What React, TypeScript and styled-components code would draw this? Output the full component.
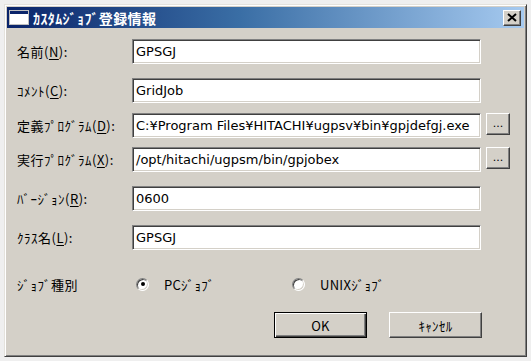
import React from "react";
import styled, { createGlobalStyle } from "styled-components";

const Global = createGlobalStyle`
  html, body { margin: 0; padding: 0; background: #efefef; }
  body { width: 531px; height: 361px; overflow: hidden; }
`;

const Window = styled.div`
  box-sizing: border-box;
  margin: 4px 0 0 4px;
  width: 523px;
  height: 353px;
  background: #d4d0c8;
  border: 1px solid;
  border-color: #e4e2dc #404040 #404040 #e4e2dc;
  box-shadow: inset 1px 1px #ffffff, inset -1px -1px #808080;
  padding: 2px;
  display: flex;
  flex-direction: column;
  font-family: "Noto Sans CJK JP", "DejaVu Sans", sans-serif;
  color: #000;
`;

const TitleBar = styled.div`
  height: 21px;
  display: flex;
  align-items: center;
  background: linear-gradient(to right, #0a246a 0%, #3a6ea5 45%, #a6caf0 100%);
  padding: 0 3px 0 2px;
`;

const TitleText = styled.div`
  color: #fff;
  font-weight: bold;
  font-size: 14px;
  letter-spacing: 0.4px;
  margin-left: 4px;
  flex: 1;
`;

const CloseButton = styled.div`
  box-sizing: border-box;
  width: 18px;
  height: 16px;
  background: #d4d0c8;
  border: 1px solid;
  border-color: #fff #404040 #404040 #fff;
  box-shadow: inset -1px -1px #808080;
  display: flex;
  align-items: center;
  justify-content: center;
`;

const Body = styled.div`
  flex: 1;
  padding: 11px 0 0 10px;
  display: flex;
  flex-direction: column;
`;

const Row = styled.div<{ $mt: number }>`
  display: flex;
  align-items: center;
  height: 25px;
  margin-top: ${(p) => p.$mt}px;
`;

const Label = styled.div`
  width: 115px;
  font-size: 13px;
  white-space: nowrap;
  letter-spacing: 0.5px;
`;

const U = styled.span`
  text-decoration: underline;
  text-underline-offset: 2px;
`;

const Field = styled.div`
  box-sizing: border-box;
  width: 349px;
  height: 25px;
  background: #fff;
  border: 1px solid;
  border-color: #808080 #ffffff #ffffff #808080;
  box-shadow: inset 1px 1px #404040, inset -1px -1px #d4d0c8;
  padding: 0 3px;
  display: flex;
  align-items: center;
  font-family: "DejaVu Sans", sans-serif;
  font-size: 13px;
  white-space: nowrap;
  overflow: hidden;
`;

const Browse = styled.div`
  box-sizing: border-box;
  align-self: flex-start;
  margin-left: 5px;
  width: 24px;
  height: 22px;
  background: #d4d0c8;
  border: 1px solid;
  border-color: #fff #404040 #404040 #fff;
  box-shadow: inset -1px -1px #808080;
  font-family: "DejaVu Sans", sans-serif;
  font-size: 11px;
  display: flex;
  align-items: flex-end;
  justify-content: center;
  padding-bottom: 4px;
`;

const RadioRow = styled.div`
  display: flex;
  align-items: center;
  height: 16px;
  margin-top: 26px;
`;

const RadioGroup = styled.div`
  display: flex;
  align-items: center;
`;

const RadioItem = styled.div<{ $w: number }>`
  display: flex;
  align-items: center;
  width: ${(p) => p.$w}px;
  font-size: 13px;
  letter-spacing: 0.3px;
`;

const RadioCircle = styled.div<{ $on: boolean }>`
  box-sizing: border-box;
  width: 13px;
  height: 13px;
  border-radius: 50%;
  background: #fff;
  border: 1px solid;
  border-color: #808080 #ffffff #ffffff #808080;
  box-shadow: inset 1px 1px #404040, inset -1px -1px #d4d0c8;
  margin: 0 15px 0 4px;
  display: flex;
  align-items: center;
  justify-content: center;
  &::after {
    content: "";
    width: 4px;
    height: 4px;
    border-radius: 50%;
    background: #000;
    display: ${(p) => (p.$on ? "block" : "none")};
  }
`;

const ButtonRow = styled.div`
  display: flex;
  margin-top: 20px;
  padding-left: 257px;
  gap: 22px;
`;

const Button = styled.div<{ $def?: boolean }>`
  box-sizing: border-box;
  width: 93px;
  height: 26px;
  background: #d4d0c8;
  border: 1px solid;
  border-color: ${(p) => (p.$def ? "#000" : "#fff #404040 #404040 #fff")};
  box-shadow: ${(p) =>
    p.$def
      ? "inset 1px 1px #fff, inset -1px -1px #404040, inset -2px -2px #808080"
      : "inset -1px -1px #808080"};
  display: flex;
  align-items: center;
  justify-content: center;
  font-size: 13px;
  letter-spacing: 0.3px;
`;

function TitleIcon() {
  return (
    <svg width="20" height="15" viewBox="0 0 20 15">
      <rect x="0.5" y="0.5" width="19" height="14" fill="#fff" stroke="#c0c0c0" />
      <rect x="1" y="1" width="18" height="3" fill="#0a246a" />
    </svg>
  );
}

function CloseIcon() {
  return (
    <svg width="10" height="9" viewBox="0 0 10 9">
      <path d="M1 1 L9 8 M9 1 L1 8" stroke="#000" strokeWidth="2" />
    </svg>
  );
}

type FieldRow = {
  label: React.ReactNode;
  value: string;
  mt: number;
  browse?: boolean;
};

const rows: FieldRow[] = [
  { label: <>名前(<U>N</U>):</>, value: "GPSGJ", mt: 0 },
  { label: <>ｺﾒﾝﾄ(<U>C</U>):</>, value: "GridJob", mt: 14 },
  {
    label: <>定義ﾌﾟﾛｸﾞﾗﾑ(<U>D</U>):</>,
    value: "C:¥Program Files¥HITACHI¥ugpsv¥bin¥gpjdefgj.exe",
    mt: 10,
    browse: true,
  },
  {
    label: <>実行ﾌﾟﾛｸﾞﾗﾑ(<U>X</U>):</>,
    value: "/opt/hitachi/ugpsm/bin/gpjobex",
    mt: 9,
    browse: true,
  },
  { label: <>ﾊﾞｰｼﾞｮﾝ(<U>R</U>):</>, value: "0600", mt: 14 },
  { label: <>ｸﾗｽ名(<U>L</U>):</>, value: "GPSGJ", mt: 14 },
];

export default function App() {
  return (
    <>
      <Global />
      <Window>
        <TitleBar>
          <TitleIcon />
          <TitleText>ｶｽﾀﾑｼﾞｮﾌﾞ登録情報</TitleText>
          <CloseButton>
            <CloseIcon />
          </CloseButton>
        </TitleBar>
        <Body>
          {rows.map((r, i) => (
            <Row key={i} $mt={r.mt}>
              <Label>{r.label}</Label>
              <Field>{r.value}</Field>
              {r.browse && <Browse>...</Browse>}
            </Row>
          ))}
          <RadioRow>
            <Label>ｼﾞｮﾌﾞ種別</Label>
            <RadioGroup>
              <RadioItem $w={156}>
                <RadioCircle $on={true} />
                PCｼﾞｮﾌﾞ
              </RadioItem>
              <RadioItem $w={120}>
                <RadioCircle $on={false} />
                UNIXｼﾞｮﾌﾞ
              </RadioItem>
            </RadioGroup>
          </RadioRow>
          <ButtonRow>
            <Button $def>OK</Button>
            <Button>ｷｬﾝｾﾙ</Button>
          </ButtonRow>
        </Body>
      </Window>
    </>
  );
}
